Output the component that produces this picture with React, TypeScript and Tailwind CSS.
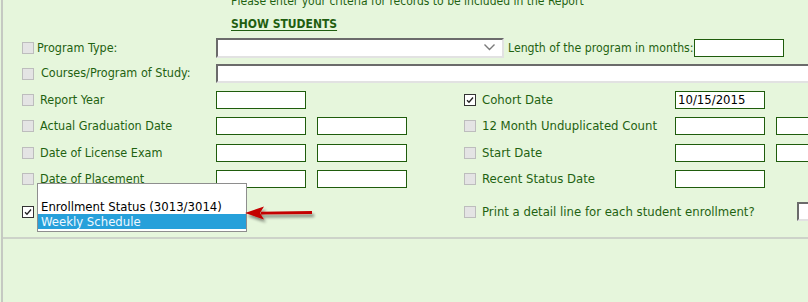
import React from "react";

const font = { fontFamily: '"DejaVu Sans Condensed", "DejaVu Sans", Tahoma, sans-serif' };

function Box({ checked = false }: { checked?: boolean }) {
  if (checked) {
    return (
      <span className="inline-flex h-[12px] w-[12px] shrink-0 items-center justify-center border border-[#333333] bg-white">
        <svg width="8" height="8" viewBox="0 0 8 8">
          <path d="M1 4.2 L3 6.2 L7 1.5" fill="none" stroke="#222" strokeWidth="1.3" />
        </svg>
      </span>
    );
  }
  return <span className="inline-block h-[12px] w-[12px] shrink-0 border border-[#bdbdbd] bg-[#e4e4e4]" />;
}

function TInput({ value = "" }: { value?: string }) {
  return (
    <div className="h-[18px] w-[90px] shrink-0 border border-[#1f5c0c] bg-white pl-[2px] text-[13px] leading-[16px] text-black">
      {value}
    </div>
  );
}

function Label({ children, pl = "pl-[4px]", size = "text-[12.5px]" }: { children: React.ReactNode; pl?: string; size?: string }) {
  return <span className={`${pl} ${size} shrink-0 whitespace-nowrap text-[#1f6211]`}>{children}</span>;
}

function LeftCol({ label, pl = "pl-[6px]" }: { label: string; pl?: string }) {
  return (
    <div className="flex w-[213px] shrink-0 items-center pl-[19px]">
      <Box />
      <Label pl={pl}>{label}</Label>
    </div>
  );
}

function RightCol({ label, checked = false }: { label: string; checked?: boolean }) {
  return (
    <div className="flex w-[268px] shrink-0 items-center pl-[57px]">
      <Box checked={checked} />
      <Label pl="pl-[6px]" size="text-[13px]">{label}</Label>
    </div>
  );
}

export default function App() {
  return (
    <div className="h-[302px] w-[808px] overflow-hidden bg-[#e6f6dc]" style={font}>
      <div className="ml-[1px] flow-root h-[302px] border-l-2 border-[#c5c9c2]">
        <div className="flow-root h-[239px] border-b-2 border-[#cdd3c9]">
          <div className="-mt-[6px] whitespace-nowrap pl-[228px] text-[12px] leading-[14px] text-[#1f6211]">
            Please enter your criteria for records to be included in the Report
          </div>
          <div className="mt-[9px] pl-[228px] text-[12px] font-bold leading-[14px] text-[#1f5e10] underline underline-offset-[2px]">
            SHOW STUDENTS
          </div>

          {/* Row 1 */}
          <div className="mt-[7px] flex h-[20px] items-center">
            <LeftCol label="Program Type:" pl="pl-[3px]" />
            <div className="relative h-[20px] w-[288px] shrink-0 border-2 border-b-[#e2e2e2] border-l-[#6b6b6b] border-r-[#e2e2e2] border-t-[#6b6b6b] bg-white">
              <svg className="absolute right-[7px] top-[4px]" width="11" height="7" viewBox="0 0 11 7">
                <path d="M0.5 0.5 L5.5 5.5 L10.5 0.5" fill="none" stroke="#7a7a7a" strokeWidth="1.4" />
              </svg>
            </div>
            <Label pl="pl-[4px]" size="text-[12.2px]">Length of the program in months:</Label>
            <TInput />
          </div>

          {/* Row 2 */}
          <div className="mt-[6px] flex h-[19px] items-center">
            <LeftCol label="Courses/Program of Study:" pl="pl-[7px]" />
            <div className="h-[19px] flex-1 border-b-2 border-l-2 border-t-2 border-b-[#e2e2e2] border-l-[#6b6b6b] border-t-[#6b6b6b] bg-white" />
          </div>

          {/* Row 3 */}
          <div className="mt-[8px] flex h-[18px] items-center">
            <LeftCol label="Report Year" />
            <TInput />
            <div className="flex w-[369px] shrink-0 items-center pl-[158px]">
              <Box checked />
              <Label pl="pl-[6px]" size="text-[13px]">Cohort Date</Label>
            </div>
            <TInput value="10/15/2015" />
          </div>

          {/* Row 4 */}
          <div className="mt-[8px] flex h-[18px] items-center">
            <LeftCol label="Actual Graduation Date" />
            <TInput />
            <div className="w-[11px] shrink-0" />
            <TInput />
            <RightCol label="12 Month Unduplicated Count" />
            <TInput />
            <div className="w-[11px] shrink-0" />
            <TInput />
          </div>

          {/* Row 5 */}
          <div className="mt-[9px] flex h-[18px] items-center">
            <LeftCol label="Date of License Exam" />
            <TInput />
            <div className="w-[11px] shrink-0" />
            <TInput />
            <RightCol label="Start Date" />
            <TInput />
            <div className="w-[11px] shrink-0" />
            <TInput />
          </div>

          {/* Row 6 */}
          <div className="mt-[8px] flex h-[18px] items-center">
            <LeftCol label="Date of Placement" />
            <TInput />
            <div className="w-[11px] shrink-0" />
            <TInput />
            <RightCol label="Recent Status Date" />
            <TInput />
          </div>

          {/* Row 7 */}
          <div className="relative mt-[14px] flex h-[19px] items-center">
            <div className="flex w-[461px] shrink-0 items-center pl-[19px]">
              <Box checked />
            </div>
            {/* open dropdown list */}
            <div className="absolute left-[34px] top-[-19px] z-10 w-[210px] border border-[#8e8e8e] bg-white text-[13px] leading-[15px] text-black">
              <div className="h-[15px]" />
              <div className="pl-[3px]">Enrollment Status (3013/3014)</div>
              <div className="bg-[#26a0da] pl-[3px] text-[#eef8ff]">Weekly Schedule</div>
              <div className="h-[2px]" />
            </div>
            <svg className="absolute left-[236px] top-[-1px] z-20" width="80" height="26" viewBox="0 0 80 26">
              <defs>
                <filter id="sh" x="-20%" y="-50%" width="140%" height="200%">
                  <feGaussianBlur in="SourceAlpha" stdDeviation="1.6" />
                  <feOffset dx="2" dy="3" result="b" />
                  <feComponentTransfer>
                    <feFuncA type="linear" slope="0.45" />
                  </feComponentTransfer>
                  <feMerge>
                    <feMergeNode />
                    <feMergeNode in="SourceGraphic" />
                  </feMerge>
                </filter>
              </defs>
              <g filter="url(#sh)">
                <path d="M22 10.8 L73 10 L73 13 L22 13.6 Z" fill="#c40000" />
                <path d="M6 12 L25 5.5 L21 12 L25 18.5 Z" fill="#c40000" />
              </g>
            </svg>
            <Box />
            <Label pl="pl-[6px]" size="text-[13px]">Print a detail line for each student enrollment?</Label>
            <div className="flex-1" />
            <div className="h-[19px] w-[11px] shrink-0 border-b-2 border-l-2 border-t-2 border-b-[#e2e2e2] border-l-[#6b6b6b] border-t-[#6b6b6b] bg-white" />
          </div>
        </div>
      </div>
    </div>
  );
}
